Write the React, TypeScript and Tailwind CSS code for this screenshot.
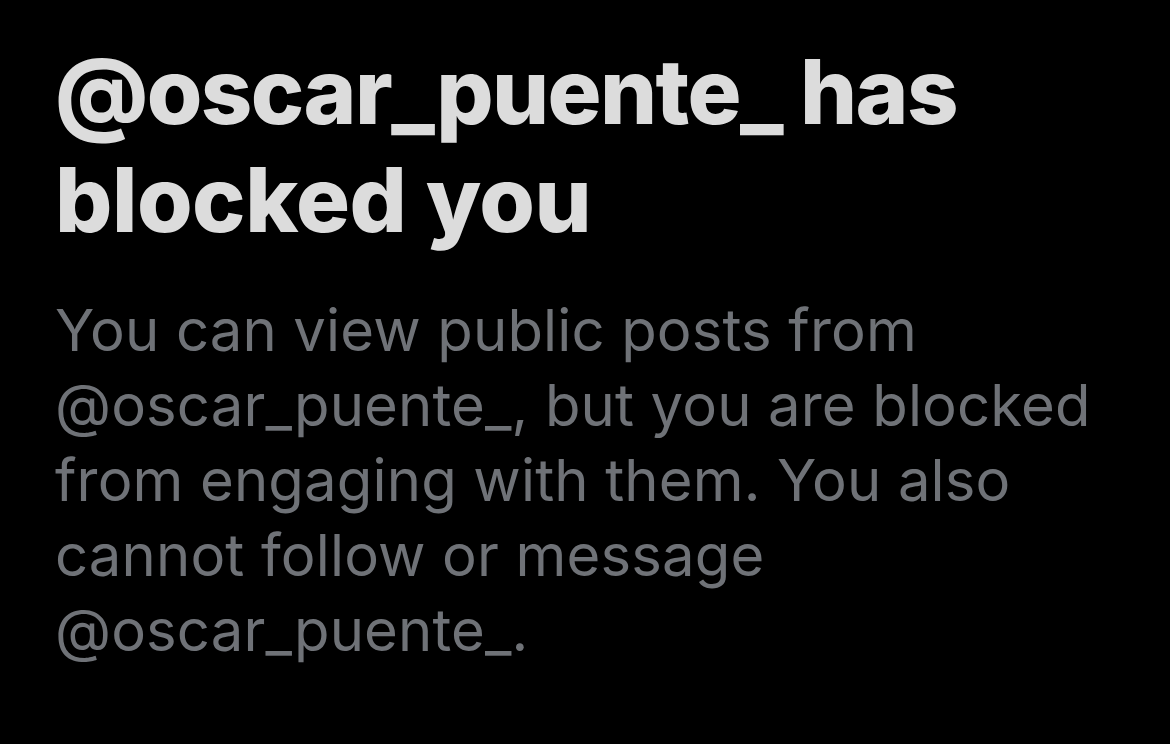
export default function App() {
  return (
    <div className="w-[1170px] h-[744px] bg-black overflow-hidden pl-[55px] pt-[38px]" style={{ fontFamily: 'Inter, "Noto Sans", sans-serif' }}>
      <h1 className="text-[90px] leading-[108px] font-extrabold text-[#dcdcdc] tracking-[-1.6px] whitespace-nowrap">
        <span className="block">@oscar_puente_ has</span>
        <span className="block tracking-[-0.5px]">blocked you</span>
      </h1>
      <p className="mt-[39px] text-[58px] leading-[75px] font-normal text-[#6f7277] tracking-[0.15px] whitespace-nowrap">
        <span className="block">You can view public posts from</span>
        <span className="block">@oscar_puente_, but you are blocked</span>
        <span className="block">from engaging with them. You also</span>
        <span className="block">cannot follow or message</span>
        <span className="block">@oscar_puente_.</span>
      </p>
    </div>
  );
}
